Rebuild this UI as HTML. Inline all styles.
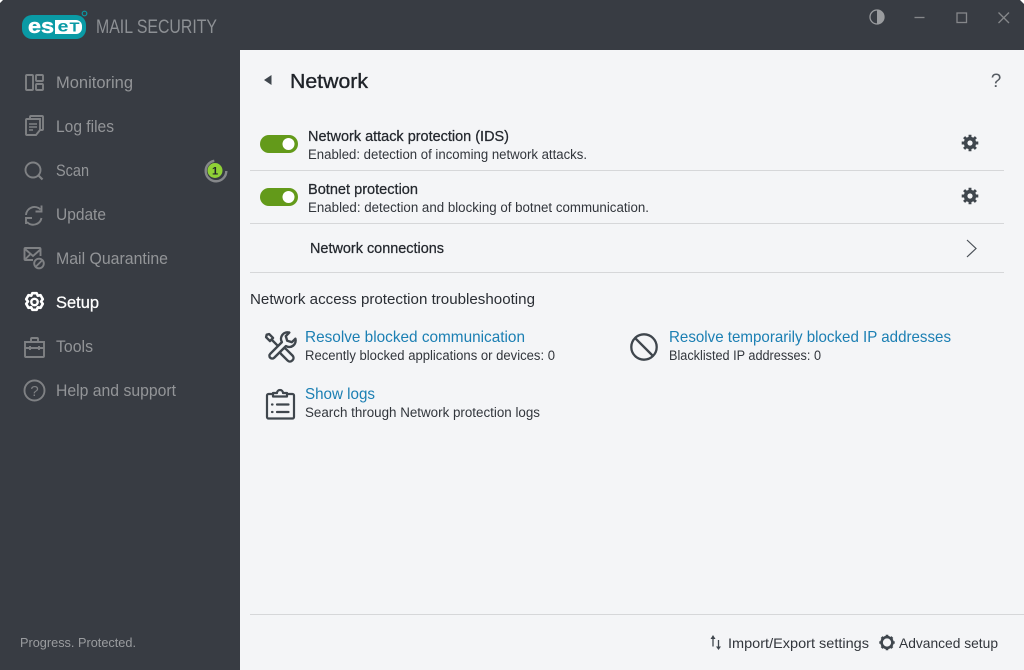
<!DOCTYPE html>
<html><head><meta charset="utf-8"><style>
html,body{margin:0;padding:0;background:#fff;width:1024px;height:670px;overflow:hidden}
svg{display:block}
text{font-family:"Liberation Sans",sans-serif}
.nav{font-size:16.5px;fill:#939598}
.ic{fill:none;stroke:#7f8184;stroke-width:1.9}
.t{font-size:14.5px;fill:#24282e;stroke:#24282e;stroke-width:.25}
.s{font-size:13.5px;fill:#32363c}
.l{font-size:16px;fill:#1b7fb3}
.d{fill:none;stroke:#3f464d;stroke-width:2.2;stroke-linecap:round;stroke-linejoin:round}
</style></head><body>
<svg width="1024" height="670" viewBox="0 0 1024 670" xmlns="http://www.w3.org/2000/svg">
<rect width="1024" height="670" fill="#383c43"/>
<path d="M0 0h3L0 3zM1024 0h-4l4 4z" fill="#fff"/>
<rect x="240" y="50" width="784" height="620" fill="#f4f5f7"/>

<!-- logo -->
<rect x="22" y="15" width="64" height="24" rx="10" fill="#0a9aa5"/>
<path d="M55 20h21a6 6 0 0 1 6 6v2a6 6 0 0 1-6 6H55z" fill="#fff"/>
<text x="28" y="33" font-size="20" font-weight="700" fill="#fff" stroke="#fff" stroke-width=".5" textLength="26" lengthAdjust="spacingAndGlyphs">es</text>
<text x="57.500" y="31.500" font-size="16" font-weight="700" fill="#0a9aa5" textLength="11" lengthAdjust="spacingAndGlyphs">e</text>
<text x="69.500" y="31.500" font-size="13" font-weight="700" fill="#0a9aa5" textLength="10" lengthAdjust="spacingAndGlyphs">T</text>
<circle cx="84.500" cy="13.500" r="2.300" fill="none" stroke="#0a9aa5" stroke-width="1.200"/>
<text x="96" y="33" font-size="19" fill="#8d9094" textLength="121" lengthAdjust="spacingAndGlyphs">MAIL SECURITY</text>

<!-- nav -->
<text class="nav" x="56" y="88" textLength="77" lengthAdjust="spacingAndGlyphs">Monitoring</text>
<text class="nav" x="56" y="132" textLength="58" lengthAdjust="spacingAndGlyphs">Log files</text>
<text class="nav" x="56" y="176" textLength="33" lengthAdjust="spacingAndGlyphs">Scan</text>
<text class="nav" x="56" y="220" textLength="50" lengthAdjust="spacingAndGlyphs">Update</text>
<text class="nav" x="56" y="264" textLength="112" lengthAdjust="spacingAndGlyphs">Mail Quarantine</text>
<text class="nav" x="56" y="308" textLength="43" lengthAdjust="spacingAndGlyphs" style="fill:#fff;stroke:#fff;stroke-width:.25">Setup</text>
<text class="nav" x="56" y="352" textLength="37" lengthAdjust="spacingAndGlyphs">Tools</text>
<text class="nav" x="56" y="396" textLength="120" lengthAdjust="spacingAndGlyphs">Help and support</text>

<!-- nav icons -->
<g class="ic">
<rect x="26" y="75" width="7" height="15" rx="1"/><rect x="36" y="75" width="7" height="6" rx="1"/><rect x="36" y="84" width="7" height="6" rx="1"/>
<path d="M30 119v-2a1 1 0 0 1 1-1h11a1 1 0 0 1 1 1v12a1 1 0 0 1-1 1h-2"/><path d="M27 119h13v11l-4 5h-9a1 1 0 0 1-1-1v-14a1 1 0 0 1 1-1z"/><path d="M29 124h8M29 127h8M29 130h4" stroke-width="1.400"/>
<circle cx="33" cy="170" r="7.500"/><path d="M38.500 175.500l4 4" stroke-width="2.200"/>
<path d="M40.500 209.500a8.500 8.500 0 0 0-14.500 5.500M41.500 218a8.500 8.500 0 0 1-14.500 4"/><path d="M41.500 205.500v6h-6M26 224v-6h6"/>
<path d="M33 260h-7.500a1 1 0 0 1-1-1v-10a1 1 0 0 1 1-1h14a1 1 0 0 1 1 1v7"/><path d="M25 249l8 7 8-7M25 259.500l6-6"/>
<circle cx="39" cy="263.500" r="4.800"/><path d="M36 266.500l6-6"/>
<path d="M25 342h19v14a1 1 0 0 1-1 1H26a1 1 0 0 1-1-1zM25 348h19M31 342v-3a1 1 0 0 1 1-1h5a1 1 0 0 1 1 1v3M30 346v4M39 346v4"/>
<circle cx="34.500" cy="390.500" r="10"/>
</g>
<text x="34.500" y="396" font-size="15" fill="#7f8184" text-anchor="middle">?</text>
<g transform="translate(34.500 302)">
<path d="M-2.200 -8.800h4.400l1 2.500 2.800-.5 2.300 4-1.800 2.300 1.800 2.300-2.300 4-2.800-.5-1 2.500h-4.400l-1-2.500-2.800.5-2.300-4 1.800-2.300-1.800-2.300 2.300-4 2.800.5z" fill="none" stroke="#fff" stroke-width="2.600" stroke-linejoin="round"/>
<circle r="3.200" fill="none" stroke="#fff" stroke-width="2.400"/>
</g>
<!-- badge -->
<path d="M226.300 171a10.300 10.300 0 1 1-12-10.200" fill="none" stroke="#85878a" stroke-width="2.400"/>
<circle cx="215" cy="170.500" r="7.500" fill="#8fd136"/>
<text x="215" y="174.500" font-size="11" font-weight="700" fill="#20242a" text-anchor="middle">1</text>

<text x="20" y="647" font-size="12.500" fill="#9a9c9f" textLength="116" lengthAdjust="spacingAndGlyphs">Progress. Protected.</text>

<!-- title bar -->
<circle cx="877" cy="17" r="7" fill="none" stroke="#9a9c9f" stroke-width="1.300"/>
<path d="M877 10a7 7 0 0 1 0 14z" fill="#9a9c9f"/>
<path d="M914.500 17.500h10" stroke="#85878a" stroke-width="1.300"/>
<rect x="957" y="13" width="9.500" height="9.500" fill="none" stroke="#85878a" stroke-width="1.300"/>
<path d="M998.500 12.500l10.500 10.500M1009 12.500l-10.500 10.500" stroke="#85878a" stroke-width="1.300"/>

<!-- header -->
<path d="M264 80l7.500-5v10z" fill="#3f464d"/>
<text x="290" y="88" font-size="20" fill="#1f2329" stroke="#1f2329" stroke-width=".35" textLength="78" lengthAdjust="spacingAndGlyphs">Network</text>
<text x="996" y="87" font-size="19" fill="#555b62" text-anchor="middle">?</text>

<!-- toggles -->
<rect x="260" y="135" width="38" height="18" rx="9" fill="#639a1a"/><circle cx="288.500" cy="144" r="6" fill="#fff"/>
<rect x="260" y="188" width="38" height="18" rx="9" fill="#639a1a"/><circle cx="288.500" cy="197" r="6" fill="#fff"/>

<text class="t" x="308" y="141" textLength="201" lengthAdjust="spacingAndGlyphs">Network attack protection (IDS)</text>
<text class="s" x="308" y="159" textLength="279" lengthAdjust="spacingAndGlyphs">Enabled: detection of incoming network attacks.</text>
<text class="t" x="308" y="194" textLength="110" lengthAdjust="spacingAndGlyphs">Botnet protection</text>
<text class="s" x="308" y="212" textLength="341" lengthAdjust="spacingAndGlyphs">Enabled: detection and blocking of botnet communication.</text>
<text class="t" x="310" y="253" textLength="134" lengthAdjust="spacingAndGlyphs">Network connections</text>

<path d="M250 170.500h754M250 223.500h754M250 272.500h754M250 614.500h774" stroke="#d6d7d9" stroke-width="1"/>

<!-- gears -->
<g transform="translate(970 143)">
<circle r="6.200" fill="#3f464d"/>
<path d="M0 -8.300V8.300M-8.300 0H8.300M-5.900 -5.900L5.900 5.900M5.900 -5.900L-5.900 5.900" stroke="#3f464d" stroke-width="2.900"/>
<circle r="2.600" fill="#f4f5f7"/>
</g>
<g transform="translate(970 196)">
<circle r="6.200" fill="#3f464d"/>
<path d="M0 -8.300V8.300M-8.300 0H8.300M-5.900 -5.900L5.900 5.900M5.900 -5.900L-5.900 5.900" stroke="#3f464d" stroke-width="2.900"/>
<circle r="2.600" fill="#f4f5f7"/>
</g>
<path d="M967 240l9 8.500-9 8.500" fill="none" stroke="#4a5057" stroke-width="1.200"/>

<text x="250" y="304" font-size="15" fill="#2a2e34" textLength="285" lengthAdjust="spacingAndGlyphs">Network access protection troubleshooting</text>

<text class="l" x="305" y="342" textLength="220" lengthAdjust="spacingAndGlyphs">Resolve blocked communication</text>
<text class="s" x="305" y="360" textLength="250" lengthAdjust="spacingAndGlyphs">Recently blocked applications or devices: 0</text>
<text class="l" x="669" y="342" textLength="282" lengthAdjust="spacingAndGlyphs">Resolve temporarily blocked IP addresses</text>
<text class="s" x="669" y="360" textLength="152" lengthAdjust="spacingAndGlyphs">Blacklisted IP addresses: 0</text>
<text class="l" x="305" y="399" textLength="70" lengthAdjust="spacingAndGlyphs">Show logs</text>
<text class="s" x="305" y="417" textLength="235" lengthAdjust="spacingAndGlyphs">Search through Network protection logs</text>

<!-- tools icon: wrench crossed with screwdriver -->
<g class="d" transform="rotate(-45 280 348)" style="stroke-width:2.400">
<path d="M280 344V336"/>
<path d="M277.800 336h4.400v-5.500l-2.200-1.300-2.200 1.300z"/>
<rect x="276.500" y="350" width="7" height="15.500" rx="3.200"/>
</g>
<g class="d" transform="rotate(45 280 348)" style="stroke-width:2.400;fill:#f4f5f7">
<path d="M277.200 359a2.800 2.800 0 0 0 5.600 0V342.500a6.500 6.500 0 0 0 1.500-12V335.500l-4.300 2.300-4.300-2.300V330.500a6.500 6.500 0 0 0 1.500 12z"/>
</g>
<!-- forbidden -->
<circle cx="644" cy="347" r="12.700" fill="none" stroke="#3f464d" stroke-width="2.300"/>
<path d="M635 338l18 18" stroke="#3f464d" stroke-width="2.300"/>
<!-- clipboard -->
<g class="d">
<path d="M273 394h-4.500a1.500 1.500 0 0 0-1.500 1.500v21.500a1.500 1.500 0 0 0 1.500 1.500h24a1.500 1.500 0 0 0 1.500-1.500v-21.500a1.500 1.500 0 0 0-1.500-1.500h-4.500"/>
<path d="M273 396.500v-3.500h4a3 3 0 0 1 6 0h4v3.500z"/>
<path d="M277 404.500h11.500M277 412h11.500"/><path d="M272 404.500h.5M272 412h.5"/>
</g>

<!-- footer -->
<path d="M713 646.500v-9M718.500 640v8" fill="none" stroke="#3f464d" stroke-width="1.300"/>
<path d="M710.500 639l2.500-4 2.500 4zM716 646.500h5l-2.500 3.500z" fill="#3f464d"/>
<text class="s" x="728" y="648" textLength="141" lengthAdjust="spacingAndGlyphs" style="font-size:14px">Import/Export settings</text>
<g transform="translate(887 642.500)">
<circle r="5.400" fill="none" stroke="#3f464d" stroke-width="2.600"/>
<path d="M0 -7.700V-5M0 5V7.700M-7.700 0H-5M5 0H7.700M-5.400 -5.400L-3.500 -3.500M3.500 3.500L5.400 5.400M5.400 -5.400L3.500 -3.500M-3.500 3.500L-5.400 5.400" stroke="#3f464d" stroke-width="2.600"/>
</g>
<text class="s" x="899" y="648" textLength="99" lengthAdjust="spacingAndGlyphs" style="font-size:14px">Advanced setup</text>
</svg>
</body></html>
